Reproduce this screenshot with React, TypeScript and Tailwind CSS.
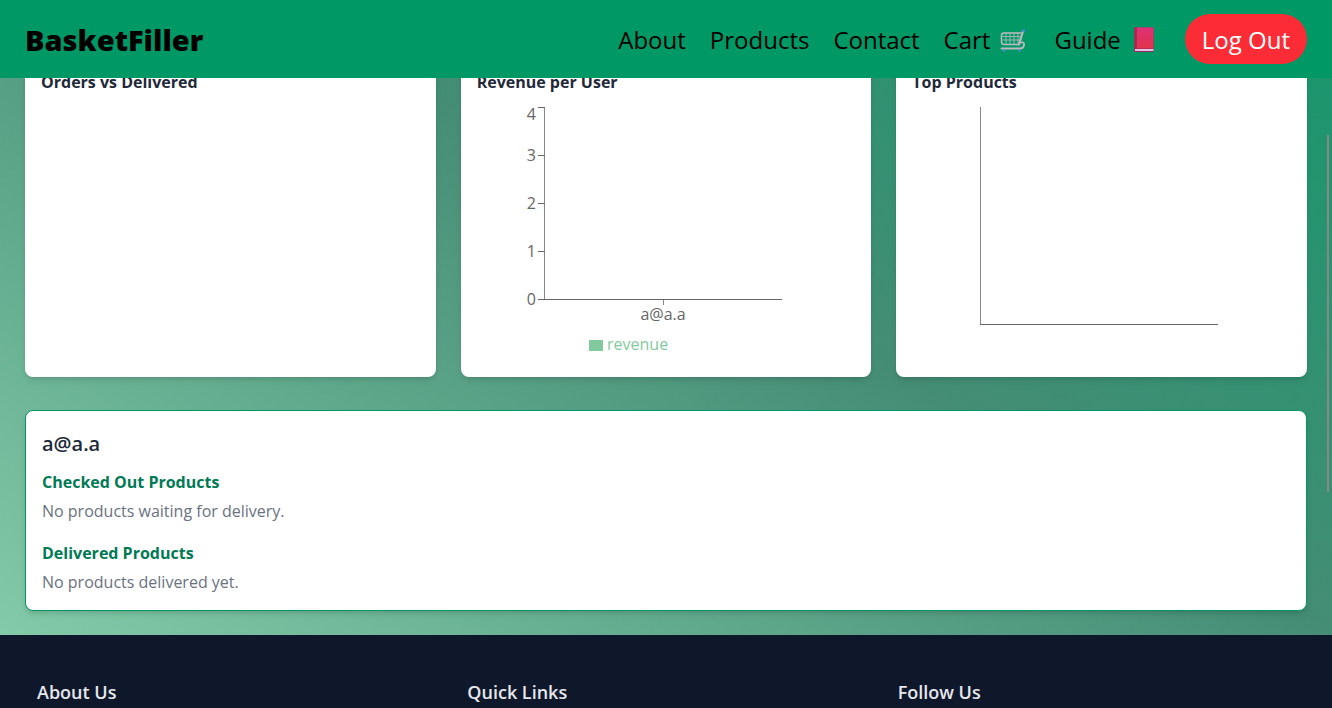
import React from "react";

const navLinks = ["About", "Products", "Contact"];

function CartIcon() {
  return (
    <svg viewBox="0 0 26 26" className="size-[26px]" aria-hidden="true">
      <g fill="none" stroke="#bdb8c0" strokeLinejoin="round" strokeLinecap="round">
        <path d="M3 9.500H20M3 13H19.500M6 6V17M10 6V17M14 6V17M18 6V17" strokeWidth="0.800" />
        <path d="M20.500 6H4Q1.500 6 1.500 8.500V14.500Q1.500 17.500 4 17.500H18.500" strokeWidth="1.500" />
        <path d="M23 4 19 17.500" strokeWidth="2.200" />
        <path d="M20.500 15.500Q24.500 14.500 24 18T20 21.500H1.500" strokeWidth="1.800" />
      </g>
      <path d="M22 3.500H25" stroke="#4a83d6" strokeWidth="2.400" />
      <circle cx="4" cy="23.800" r="1.300" fill="#4a83d6" />
      <circle cx="19.500" cy="23.800" r="1.300" fill="#4a83d6" />
    </svg>
  );
}

function BookIcon() {
  return (
    <svg viewBox="0 0 26 26" className="size-[26px]" aria-hidden="true">
      <defs>
        <linearGradient id="cover" x1="0" y1="0" x2="0" y2="1">
          <stop offset="0" stopColor="#df2f78" />
          <stop offset="1" stopColor="#e0344a" />
        </linearGradient>
      </defs>
      <rect x="3" y="0.500" width="19.500" height="24.500" rx="1" fill="#a51f5c" />
      <rect x="4" y="22" width="18.500" height="2" fill="#d9c5e8" />
      <rect x="5.500" y="0.500" width="17" height="21" fill="url(#cover)" />
      <rect x="3" y="0.500" width="3" height="21" fill="#a82a50" />
    </svg>
  );
}

function Card({ title, children }: { title: string; children?: React.ReactNode }) {
  return (
    <section className="h-[328px] rounded-lg bg-white px-4 pt-[21px] shadow-md">
      <h2 className="mb-[7px] font-bold leading-6 text-gray-800">{title}</h2>
      {children}
    </section>
  );
}

function RevenueChart() {
  return (
    <svg viewBox="0 0 378 262" className="h-[262px] w-[378px] max-w-full text-base" role="img" aria-label="Revenue per user">
      <g fill="none" shapeRendering="crispEdges">
        <path d="M67.500 6V198.500M186.500 198V204" stroke="#888" />
        <path d="M67 198.500H305" stroke="#666" />
        {[0, 1, 2, 3, 4].map((n) => (
          <path key={n} d={`M61 ${198.5 - n * 48}H67.500`} stroke="#666" />
        ))}
      </g>
      <g fill="#666">
        {[0, 1, 2, 3, 4].map((n) => (
          <text key={n} x="59" y={n === 4 ? 19 : 204 - n * 48} textAnchor="end">{n}</text>
        ))}
        <text x="186" y="219" textAnchor="middle">a@a.a</text>
      </g>
      <rect x="112" y="239" width="14" height="11" fill="#82ca9d" />
      <text x="130" y="249" fill="#82ca9d">revenue</text>
    </svg>
  );
}

function ProductsChart() {
  return (
    <svg viewBox="0 0 378 262" className="h-[262px] w-[378px] max-w-full" role="img" aria-label="Top products">
      <g fill="none" shapeRendering="crispEdges">
        <path d="M68 6V223.500" stroke="#888" />
        <path d="M68 223.500H306" stroke="#666" />
      </g>
    </svg>
  );
}

export default function App() {
  return (
    <div className="relative h-screen overflow-hidden bg-[#0f172b] font-['Segoe_UI','Open_Sans',sans-serif] text-base">
      <header className="flex h-[78px] items-center justify-between bg-[#009966] px-[25px] text-black">
        <a href="#" className="pt-0.5 text-[29px] font-black">BasketFiller</a>
        <nav className="flex items-center gap-6 text-2xl">
          {navLinks.map((label) => (
            <a key={label} href="#" className="pt-0.5">{label}</a>
          ))}
          <a href="#" className="flex items-center gap-2.5 pr-1 pt-0.5">Cart <CartIcon /></a>
          <a href="#" className="flex items-center gap-2.5 pr-1 pt-0.5">Guide <BookIcon /></a>
          <button className="h-[50px] rounded-full bg-[#fb2c36] px-[17px] pt-0.5 text-white">Log Out</button>
        </nav>
      </header>
      <div className="overflow-hidden bg-[linear-gradient(to_top_right,#82caa8,#458d75_50%,#0b996a)] bg-[length:100%_790px] bg-bottom px-[25px] pb-6">
        <main className="-mt-[29px]">
          <div className="grid grid-cols-3 gap-[25px]">
            <Card title="Orders vs Delivered" />
            <Card title="Revenue per User"><RevenueChart /></Card>
            <Card title="Top Products"><ProductsChart /></Card>
          </div>
          <section className="mt-[33px] rounded-lg border border-[#009966] bg-white px-4 pb-4 pt-[19px] shadow-md">
            <h2 className="mb-3 text-xl font-semibold text-gray-800">a@a.a</h2>
            <h3 className="font-bold text-[#007a55]">Checked Out Products</h3>
            <p className="mt-[5px] text-gray-500">No products waiting for delivery.</p>
            <h3 className="mt-[18px] font-bold text-[#007a55]">Delivered Products</h3>
            <p className="mt-[5px] text-gray-500">No products delivered yet.</p>
          </section>
        </main>
      </div>
      <footer className="grid grid-cols-3 gap-[33px] px-[37px] pt-[43px] text-lg font-semibold text-gray-200">
        <h2>About Us</h2>
        <h2>Quick Links</h2>
        <h2>Follow Us</h2>
      </footer>
      <div className="absolute right-[3px] top-[135px] h-[357px] w-0.5 bg-[#888]" />
    </div>
  );
}
